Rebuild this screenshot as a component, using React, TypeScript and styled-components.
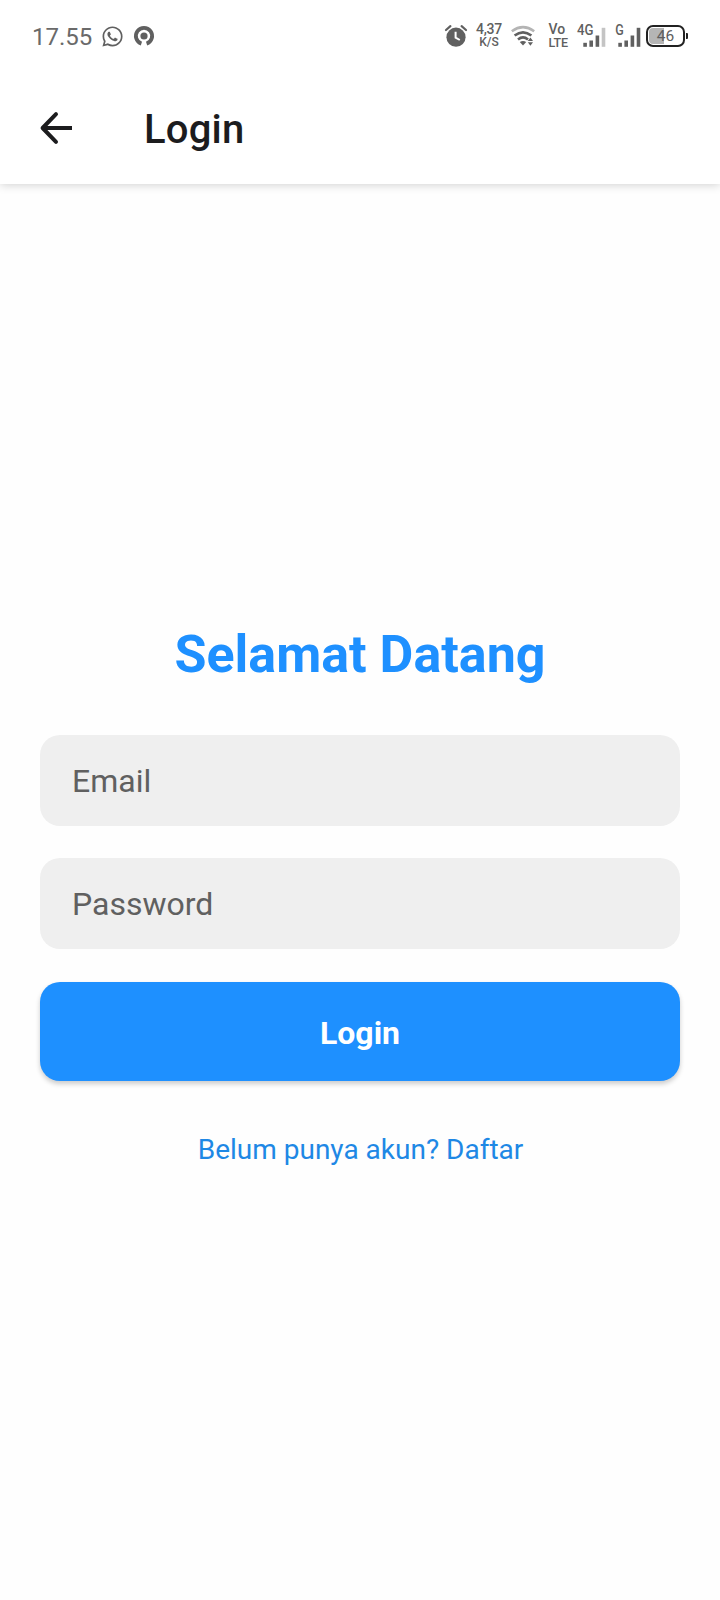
import React from "react";
import styled, { createGlobalStyle } from "styled-components";
import { FaWhatsapp } from "react-icons/fa";

const GlobalStyle = createGlobalStyle`
  *, *::before, *::after { box-sizing: border-box; }
  body {
    margin: 0;
    background: #fefefe;
    font-family: Roboto, "Liberation Sans", sans-serif;
  }
`;

const Screen = styled.div`
  display: flex;
  flex-direction: column;
  width: 720px;
  height: 1600px;
  overflow: hidden;
  background: #fefefe;
`;

const TopArea = styled.div`
  flex: none;
  height: 184px;
  background: #fff;
  box-shadow: 0 1px 9px rgba(0, 0, 0, 0.18);
`;

const StatusBar = styled.div`
  display: flex;
  justify-content: space-between;
  height: 72px;
  padding: 20px 32px 0 32px;
  color: #606060;
`;

const StatusGroup = styled.div`
  display: flex;
  align-items: center;
  height: 32px;
`;

const Clock = styled.span`
  width: 61px;
  margin-right: 7.5px;
  font-size: 24px;
  line-height: 32px;
  padding-top: 2px;
  color: #6a6a6a;
`;

const Icon = styled.svg<{ $gap?: number }>`
  display: block;
  flex: none;
  margin-left: ${(p) => p.$gap ?? 0}px;
  overflow: visible;
`;

const StackedLabel = styled.div<{ $gap: number; $width: number; $center?: boolean }>`
  display: flex;
  flex-direction: column;
  align-items: ${(p) => (p.$center ? "center" : "flex-start")};
  flex: none;
  width: ${(p) => p.$width}px;
  margin-left: ${(p) => p.$gap}px;
  white-space: nowrap;
`;

const LabelLine = styled.span<{ $size: number; $spacing?: number }>`
  font-size: ${(p) => p.$size}px;
  font-weight: 500;
  line-height: 13px;
  letter-spacing: ${(p) => p.$spacing ?? 0}px;
`;

const SvgText = styled.text`
  font-family: Roboto, "Liberation Sans", sans-serif;
  font-size: 14px;
  font-weight: 500;
  fill: #606060;
`;

const Battery = styled.div`
  display: flex;
  align-items: center;
  margin-left: 5px;
`;

const BatteryShell = styled.div`
  width: 39px;
  height: 22px;
  border: 2px solid #222;
  border-radius: 7px;
  padding: 1px;
`;

const BatteryLevel = styled.div`
  height: 100%;
  border-radius: 4px;
  background: linear-gradient(to right, #b5b5b5 45%, #fff 45%);
  font-size: 15.5px;
  font-weight: 400;
  line-height: 17px;
  text-align: center;
`;

const BatteryTip = styled.div`
  width: 2px;
  height: 6px;
  margin-left: 1px;
  border-radius: 0 1px 1px 0;
  background: #222;
`;

const AppBar = styled.header`
  display: flex;
  align-items: center;
  height: 112px;
  padding: 0 40px;
`;

const BackButton = styled.button`
  display: flex;
  width: 32px;
  height: 32px;
  padding: 0;
  border: 0;
  background: none;
`;

const AppBarTitle = styled.h1`
  margin: 4px 0 0 72px;
  font-size: 40px;
  font-weight: 500;
  line-height: 48px;
  letter-spacing: 0.2px;
  color: #1c1c1e;
`;

const Content = styled.main`
  display: flex;
  flex: 1;
  flex-direction: column;
  justify-content: center;
  padding: 8px 40px 0;
`;

const Welcome = styled.h2`
  margin: 0 0 47px;
  font-size: 52px;
  font-weight: 700;
  line-height: 66px;
  text-align: center;
  color: #1e90ff;
`;

const Field = styled.input`
  display: block;
  width: 100%;
  height: 91px;
  margin: 0 0 32px;
  padding: 1px 32px 0;
  border: 0;
  border-radius: 20px;
  outline: 0;
  background: #efefef;
  font: 400 32px Roboto, "Liberation Sans", sans-serif;
  color: #222;
  &::placeholder { color: #606060; opacity: 1; }
`;

const SubmitButton = styled.button`
  height: 99px;
  margin: 1px 0 0;
  padding: 3px 0 0;
  border: 0;
  border-radius: 20px;
  background: #1e90ff;
  box-shadow: 0 3px 5px rgba(0, 0, 0, 0.2);
  font: 700 32px Roboto, "Liberation Sans", sans-serif;
  color: #fff;
`;

const RegisterLink = styled.a`
  margin-top: 49px;
  padding-left: 1px;
  font-size: 28px;
  line-height: 40px;
  text-align: center;
  color: #1e88e5;
`;

const BarRects = ({ lastFaded }: { lastFaded?: boolean }) => (
  <g fill="#606060">
    <rect x="6.3" y="17.8" width="3.6" height="4" />
    <rect x="12.4" y="15.5" width="3.6" height="6.3" />
    <rect x="18.6" y="10.5" width="3.6" height="11.3" />
    <rect x="24.7" y="2.8" width="3.6" height="19" fill={lastFaded ? "#c4c4c4" : "#606060"} />
  </g>
);

export default function App() {
  return (
    <Screen>
      <GlobalStyle />
      <TopArea>
        <StatusBar>
          <StatusGroup>
            <Clock>17.55</Clock>
            <FaWhatsapp size={23} />
            <Icon $gap={10.5} width="20" height="20" viewBox="0 0 20 20">
              <path d="M7.4 17.6A8.1 8.1 0 1 1 12.6 17.6" fill="none" stroke="#606060" strokeWidth="3.8" />
              <circle cx="10" cy="10" r="3.6" fill="#606060" />
            </Icon>
          </StatusGroup>
          <StatusGroup>
            <Icon width="22" height="22" viewBox="0 0 22 22">
              <circle cx="11" cy="12.2" r="9.6" fill="#606060" />
              <path d="M1 5L5.4 1.2M21 5L16.6 1.2" stroke="#606060" strokeWidth="2.2" strokeLinecap="round" />
              <path d="M10.6 6.8V12.6L14.8 15" fill="none" stroke="#fff" strokeWidth="2" />
            </Icon>
            <StackedLabel $gap={8.5} $width={27} $center>
              <LabelLine $size={14} $spacing={-0.2}>4,37</LabelLine>
              <LabelLine $size={12}>K/S</LabelLine>
            </StackedLabel>
            <Icon $gap={8.5} width="24" height="20" viewBox="0 0 24 20">
              <g fill="none" strokeWidth="2.6">
                <path d="M0.8 5.2Q12 -2.8 23.2 5.2" stroke="#b4b4b4" />
                <path d="M3.6 9.6Q12 3 20.4 9.6" stroke="#606060" />
                <path d="M7 13.5Q12 9.4 17 13.5" stroke="#606060" />
              </g>
              <path d="M8.8 16Q12 13.8 15.2 16L12 19.4Z" fill="#606060" />
              <path d="M16.8 14.9L19.4 11.4L22 14.9ZM16.8 16.3L19.4 19.8L22 16.3Z" fill="#606060" />
            </Icon>
            <StackedLabel $gap={13.5} $width={20}>
              <LabelLine $size={14}>Vo</LabelLine>
              <LabelLine $size={12.5} $spacing={-0.2}>LTE</LabelLine>
            </StackedLabel>
            <Icon $gap={8} width="29" height="22" viewBox="0 0 29 22">
              <SvgText x="0" y="10" textLength="16.5" lengthAdjust="spacingAndGlyphs">4G</SvgText>
              <BarRects lastFaded />
            </Icon>
            <Icon $gap={6.5} width="29" height="22" viewBox="0 0 29 22">
              <SvgText x="3.2" y="10" textLength="8.5" lengthAdjust="spacingAndGlyphs">G</SvgText>
              <BarRects />
            </Icon>
            <Battery>
              <BatteryShell>
                <BatteryLevel>46</BatteryLevel>
              </BatteryShell>
              <BatteryTip />
            </Battery>
          </StatusGroup>
        </StatusBar>
        <AppBar>
          <BackButton aria-label="Kembali">
            <Icon width="32" height="32" viewBox="0 0 32 32">
              <path
                d="M16 2.2L2.6 16L16 29.8"
                fill="none"
                stroke="#1c1c1e"
                strokeWidth="4"
                strokeLinecap="round"
                strokeLinejoin="round"
              />
              <path d="M3 16H32" stroke="#1c1c1e" strokeWidth="4" />
            </Icon>
          </BackButton>
          <AppBarTitle>Login</AppBarTitle>
        </AppBar>
      </TopArea>
      <Content>
        <Welcome>Selamat Datang</Welcome>
        <Field placeholder="Email" />
        <Field type="password" placeholder="Password" />
        <SubmitButton>Login</SubmitButton>
        <RegisterLink>Belum punya akun? Daftar</RegisterLink>
      </Content>
    </Screen>
  );
}
